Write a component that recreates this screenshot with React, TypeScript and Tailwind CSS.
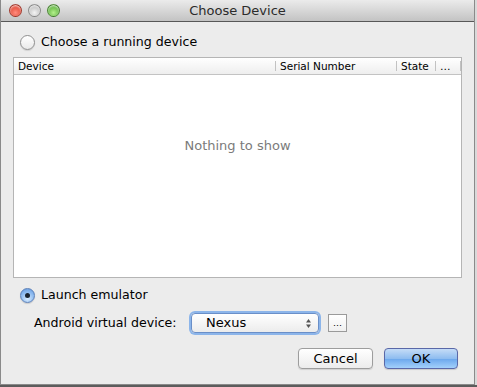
import React from "react";

const font = { fontFamily: '"DejaVu Sans", "Lucida Grande", sans-serif' };

function Light({ c }: { c: string }) {
  return (
    <span
      className={`block w-[13px] h-[13px] rounded-full border border-black/30 shadow-[inset_0_1px_2px_rgba(255,255,255,0.8)] ${c}`}
    />
  );
}

function Radio({ checked }: { checked?: boolean }) {
  return checked ? (
    <span className="flex items-center justify-center w-[15px] h-[15px] rounded-full border border-[#5b7fb8] bg-[radial-gradient(circle_at_50%_75%,#d9ecff_0%,#8ebbf0_55%,#5f96dc_100%)] shadow-[0_1px_1px_rgba(0,0,0,0.15)]">
      <span className="block w-[5px] h-[5px] rounded-full bg-[#1a2430]" />
    </span>
  ) : (
    <span className="block w-[15px] h-[15px] rounded-full border border-[#8f8f8f] bg-[linear-gradient(#ffffff,#e9e9e9)] shadow-[0_1px_1px_rgba(0,0,0,0.12)]" />
  );
}

function Th({ label, w, last }: { label: string; w: string; last?: boolean }) {
  return (
    <div className={`${w} flex items-center h-full relative pl-[4px]`}>
      <span className="text-[10.5px] text-black leading-none">{label}</span>
      {!last && <span className="absolute right-0 top-[3px] bottom-[3px] w-px bg-[#c2c2c2]" />}
    </div>
  );
}

export default function App() {
  return (
    <div className="w-[477px] h-[387px] bg-[#d9d9d9] flex flex-col" style={font}>
      <div className="w-[475px] h-[385px] flex flex-col bg-[#ececec] border border-[#8a8a8a] border-t-0">
        {/* title bar */}
        <div className="h-[22px] relative flex items-center justify-center bg-[linear-gradient(#ebebeb,#c3c3c3)] border-b border-[#585858]">
          <div className="absolute left-[8px] top-[4px] flex gap-[6px]">
            <Light c="bg-[radial-gradient(circle_at_50%_70%,#ff8d7f,#d42a16)]" />
            <Light c="bg-[radial-gradient(circle_at_50%_70%,#f4f4f4,#a9a9a9)]" />
            <Light c="bg-[radial-gradient(circle_at_50%_70%,#b4f08c,#3a9a1d)]" />
          </div>
          <span className="text-[13px] text-[#2b2b2b]">Choose Device</span>
        </div>

        <div className="flex flex-col px-[12px]">
          <div className="mt-[11px] h-[18px] flex items-center gap-[6px] pl-[7px]">
            <Radio />
            <span className="text-[12.6px] text-black">Choose a running device</span>
          </div>

          {/* table */}
          <div className="mt-[6px] h-[221px] border border-[#b5b5b5] bg-white flex flex-col">
            <div className="h-[17px] flex bg-[linear-gradient(#ffffff,#eeeeee)] border-b border-[#c3c3c3]">
              <Th label="Device" w="w-[262px]" />
              <Th label="Serial Number" w="w-[121px]" />
              <Th label="State" w="w-[39px]" />
              <Th label="…" w="w-[25px]" />
            </div>
            <div className="flex-1 flex items-center justify-center pb-[60px]">
              <span className="text-[13px] text-[#7b7b7b]">Nothing to show</span>
            </div>
          </div>

          <div className="mt-[8px] h-[18px] flex items-center gap-[6px] pl-[7px]">
            <Radio checked />
            <span className="text-[12.6px] text-black">Launch emulator</span>
          </div>

          <div className="mt-[9px] h-[20px] flex items-center pl-[21px]">
            <span className="text-[12.6px] text-black w-[157px]">Android virtual device:</span>
            <div className="w-[128px] h-[20px] rounded-[4px] border border-[#6a8fc8] bg-[linear-gradient(#ffffff,#ececec)] shadow-[0_0_0_2px_#8cb5ea] flex items-center pl-[14px] pr-[6px]">
              <span className="text-[13px] text-black flex-1">Nexus</span>
              <svg width="7" height="11" viewBox="0 0 7 11">
                <path d="M3.5 1 L6 4.5 L1 4.5 Z" fill="#555" />
                <path d="M3.5 10 L6 6.5 L1 6.5 Z" fill="#555" />
              </svg>
            </div>
            <div className="ml-[9px] w-[19px] h-[18px] border border-[#9a9a9a] bg-[linear-gradient(#ffffff,#f0f0f0)] flex items-center justify-center">
              <span className="text-[9px] text-black leading-none">…</span>
            </div>
          </div>

          <div className="mt-[15px] h-[22px] flex justify-end gap-[11px] pr-[4px]">
            <div className="w-[75px] h-[21px] rounded-[4px] border border-[#9d9d9d] bg-[linear-gradient(#ffffff,#ececec)] shadow-[0_1px_1px_rgba(0,0,0,0.12)] flex items-center justify-center">
              <span className="text-[13px] text-black">Cancel</span>
            </div>
            <div className="w-[74px] h-[21px] rounded-[4px] border border-[#5a68a8] bg-[linear-gradient(#c5dcf7,#8fbdf0_50%,#6aa6ec_51%,#a3d0fb)] shadow-[0_1px_1px_rgba(0,0,0,0.15)] flex items-center justify-center">
              <span className="text-[13px] text-black">OK</span>
            </div>
          </div>
        </div>
      </div>
      <div className="flex-1 bg-[#5c5c5c]" />
    </div>
  );
}
